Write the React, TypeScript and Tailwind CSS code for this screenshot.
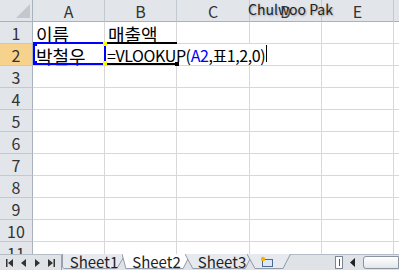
import React from 'react';

const FONT = "font-['Noto_Sans_CJK_KR','Noto_Sans',sans-serif]";

const COLS = [
  { label: 'A', w: 'w-[72px]' },
  { label: 'B', w: 'w-[72px]' },
  { label: 'C', w: 'w-[73px]' },
  { label: 'D', w: 'w-[72px]' },
  { label: 'E', w: 'w-[72px]' },
];

const ROWS = [1, 2, 3, 4, 5, 6, 7, 8, 9, 10, 11];

const cellText: Record<string, string> = {
  '1-0': '이름',
  '1-1': '매출액',
  '2-0': '박철우',
};

const Tab = ({ label, active, w, path, pad = '' }: { label: string; active?: boolean; w: string; path: string; pad?: string }) => (
  <div className={`relative h-full ${w} ${pad} flex items-center justify-center`}>
    <svg className="absolute inset-0 w-full h-full" viewBox="0 0 70 16" preserveAspectRatio="none">
      <path d={path} fill={active ? '#ffffff' : '#e6e9ee'} stroke="#8d96a3" strokeWidth="1" />
    </svg>
    <span className="relative text-[15px] leading-none text-[#222] pb-[1px]">{label}</span>
  </div>
);

const App: React.FC = () => {
  return (
    <div className={`w-[399px] h-[270px] overflow-hidden bg-white ${FONT} select-none`}>
      {/* grid area */}
      <div className="relative h-[254px] overflow-hidden">
        {/* column headers */}
        <div className="flex h-[22px]">
          <div className="relative w-[33px] shrink-0 bg-[#e2e6eb] border-r border-b border-[#a9b1bb]">
            <svg className="absolute right-[2px] bottom-[3px]" width="14" height="14" viewBox="0 0 14 14">
              <polygon points="14,0 14,14 0,14" fill="#c3c8cf" />
            </svg>
          </div>
          {COLS.map(c => (
            <div
              key={c.label}
              className={`${c.w} shrink-0 bg-[#e2e6eb] border-r border-b border-r-[#c3c9d1] border-b-[#a9b1bb] flex items-center justify-center text-[16px] text-[#333]`}
            >
              {c.label}
            </div>
          ))}
          <div className="flex-1 bg-[#e2e6eb] border-b border-[#a9b1bb]" />
        </div>

        {ROWS.map(r => (
          <div key={r} className="flex h-[22px]">
            <div
              className={`w-[33px] shrink-0 border-r border-b border-[#a9b1bb] border-b-[#c3c9d1] flex items-center justify-center text-[16px] text-[#333] ${
                r === 2 ? 'bg-[#f6d28c]' : 'bg-[#e2e6eb]'
              }`}
            >
              {r}
            </div>
            {COLS.map((c, i) => (
              <div
                key={c.label}
                className={`${c.w} shrink-0 border-r border-b border-[#d8d8d8] flex items-center pl-[3px] pt-[3px] text-[18px] leading-none text-black`}
              >
                {cellText[`${r}-${i}`]}
              </div>
            ))}
            <div className="flex-1 border-b border-[#d8d8d8]" />
          </div>
        ))}

        {/* A2 range reference highlight */}
        <div className="absolute left-[33px] top-[42px] w-[73px] h-[23px] border-2 border-[#0000ff]" />
        <div className="absolute left-[33px] top-[42px] w-[4px] h-[4px] bg-[#0000ff]" />
        <div className="absolute left-[33px] top-[61px] w-[4px] h-[4px] bg-[#0000ff]" />
        <div className="absolute left-[103px] top-[42px] w-[4px] h-[4px] bg-[#ffff00]" />
        <div className="absolute left-[103px] top-[61px] w-[4px] h-[4px] bg-[#ffff00]" />

        {/* B2 in edit mode */}
        <div className="absolute left-[107px] top-[44px] w-[162px] h-[19px] bg-white flex items-center pt-[3px] text-[16px] tracking-[-0.4px] leading-none text-black whitespace-nowrap">
          <span>=VLOOKUP(</span>
          <span className="text-[#0000ff]">A2</span>
          <span>,표1,2,0)</span>
          <span className="ml-[1px] -mt-[3px] w-[1px] h-[17px] bg-black" />
        </div>
        <div className="absolute left-[107px] top-[42px] w-[70px] h-[2px] bg-black" />
        <div className="absolute left-[107px] top-[63px] w-[70px] h-[2px] bg-black" />
        <div className="absolute left-[175px] top-[62px] w-[4px] h-[4px] bg-black" />

        {/* author tooltip */}
        <div className="absolute left-[248px] top-[2px] text-[14px] leading-none text-[#222] [text-shadow:1px_1px_2px_#9aa0a8]">
          Chulwoo Pak
        </div>
      </div>

      {/* sheet tab bar */}
      <div className="flex h-[16px] bg-[#dfe3e8] border-t border-[#b6bcc5]">
        <div className="w-[62px] shrink-0 flex items-center justify-around px-[3px] border-r border-[#9aa2ad]">
          <svg width="8" height="8" viewBox="0 0 8 8"><rect x="0" y="0" width="1.5" height="8" fill="#333" /><polygon points="7,0 7,8 2,4" fill="#333" /></svg>
          <svg width="6" height="8" viewBox="0 0 6 8"><polygon points="5,0 5,8 0,4" fill="#333" /></svg>
          <svg width="6" height="8" viewBox="0 0 6 8"><polygon points="1,0 1,8 6,4" fill="#333" /></svg>
          <svg width="8" height="8" viewBox="0 0 8 8"><polygon points="1,0 1,8 6,4" fill="#333" /><rect x="6.5" y="0" width="1.5" height="8" fill="#333" /></svg>
        </div>
        <div className="flex h-full -mt-[1px]">
          <Tab label="Sheet1" w="w-[64px]" path="M0.5,0 L0.5,14 L2.5,15.5 L60,15.5 L69.5,0" />
          <div className="-ml-[4px]">
            <Tab label="Sheet2" active w="w-[69px]" path="M0,0 L4,15.5 L62,15.5 L69.5,0" />
          </div>
          <div className="-ml-[6px]">
            <Tab label="Sheet3" w="w-[68px]" pad="pl-[6px]" path="M0,0 L8,15.5 L62,15.5 L69.5,0" />
          </div>
          <div className="-ml-[6px] relative w-[44px] h-full">
            <svg className="absolute inset-0 w-full h-full" viewBox="0 0 44 16" preserveAspectRatio="none">
              <path d="M0,0 L8,15.5 L36,15.5 L43.5,0" fill="#e6e9ee" stroke="#8d96a3" strokeWidth="1" />
            </svg>
            <svg className="absolute left-[13px] top-[2px]" width="14" height="12" viewBox="0 0 14 12">
              <rect x="2.5" y="3.5" width="10" height="7" fill="#dce8f6" stroke="#4a6b93" />
              <circle cx="3" cy="3" r="2.2" fill="#f4b400" />
            </svg>
          </div>
        </div>
        <div className="flex-1" />
        <div className="flex items-center gap-[7px] pr-0">
          <div className="w-[8px] h-[13px] bg-white border border-[#7c8591] flex items-center justify-center">
            <div className="w-[1px] h-[7px] bg-[#555]" />
          </div>
          <svg width="6" height="9" viewBox="0 0 6 9"><polygon points="5,0 5,9 0,4.5" fill="#222" /></svg>
          <div className="w-[36px] h-[13px] rounded-l-[3px] border border-[#8a939e] bg-gradient-to-b from-white to-[#e3e7ec]" />
        </div>
      </div>
    </div>
  );
};

export default App;
